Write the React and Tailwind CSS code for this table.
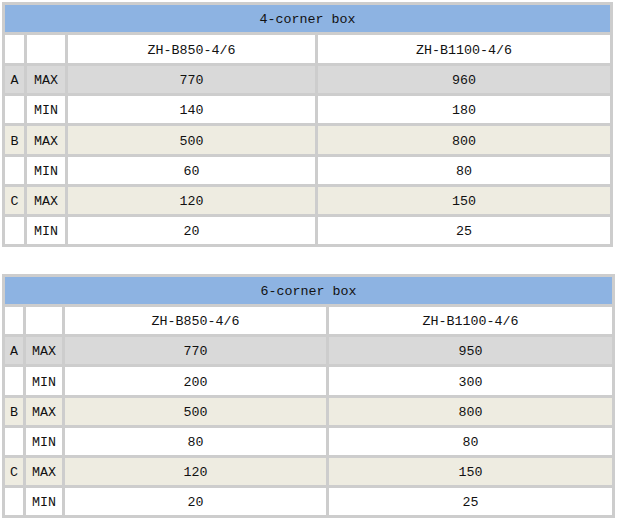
import React from "react";

// Spec tables for the corner boxes
const tables = [
  {
    title: "4-corner box",
    cols: "grid-cols-[19px_38px_247px_1fr] w-[611px]",
    rows: "grid-rows-[27px_28px_27px_27px_28px_27px_27px_27px]",
    models: ["ZH-B850-4/6", "ZH-B1100-4/6"],
    data: [
      ["A", "MAX", "770", "960"],
      ["", "MIN", "140", "180"],
      ["B", "MAX", "500", "800"],
      ["", "MIN", "60", "80"],
      ["C", "MAX", "120", "150"],
      ["", "MIN", "20", "25"],
    ],
  },
  {
    title: "6-corner box",
    cols: "grid-cols-[18px_36px_261px_1fr] w-[613px]",
    rows: "grid-rows-[27px_27px_27px_28px_27px_27px_27px_27px]",
    models: ["ZH-B850-4/6", "ZH-B1100-4/6"],
    data: [
      ["A", "MAX", "770", "950"],
      ["", "MIN", "200", "300"],
      ["B", "MAX", "500", "800"],
      ["", "MIN", "80", "80"],
      ["C", "MAX", "120", "150"],
      ["", "MIN", "20", "25"],
    ],
  },
];

const rowBg = (i) => {
  if (i === 0) return "bg-[#d9d9d9]";
  if (i % 2 === 0) return "bg-[#eeece1]";
  return "bg-white";
};

const Cell = ({ className = "", children }) => (
  <div className={`flex items-center justify-center pt-[3px] ${className}`}>{children}</div>
);

const SpecTable = ({ table }) => (
  <div className={`grid ${table.cols} ${table.rows} gap-[3px] bg-[#cdcdcd] p-[3px]`}>
    <Cell className="col-span-4 bg-[#8db3e2]">{table.title}</Cell>
    <Cell className="bg-white" />
    <Cell className="bg-white" />
    <Cell className="bg-white">{table.models[0]}</Cell>
    <Cell className="bg-white">{table.models[1]}</Cell>
    {table.data.map((row, i) =>
      row.map((v, j) => (
        <Cell key={`${i}-${j}`} className={rowBg(i)}>
          {v}
        </Cell>
      ))
    )}
  </div>
);

export default function App() {
  return (
    <div
      className="flex flex-col gap-[27px] bg-white pl-[2px] pt-[2px] text-[13.33px] leading-none text-[#111]"
      style={{ fontFamily: '"Liberation Mono", monospace' }}
    >
      {tables.map((t) => (
        <SpecTable key={t.title} table={t} />
      ))}
    </div>
  );
}
